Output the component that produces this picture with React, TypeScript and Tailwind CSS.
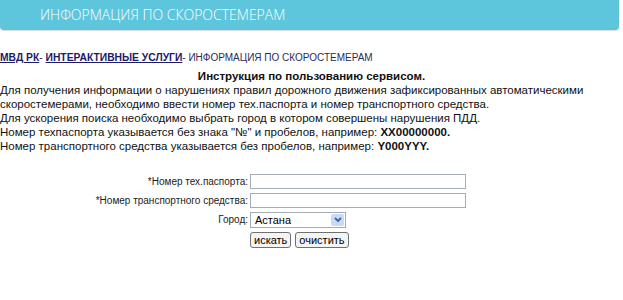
import React from "react";

const tahoma = { fontFamily: '"Liberation Sans", Arial, sans-serif' };

export default function App() {
  return (
    <div className="w-[623px] h-[300px] bg-white overflow-hidden text-black" style={tahoma}>
      <div className="mr-[4px] h-[30px] bg-[#5ec6dc] rounded-b-[4px] shadow-[0_1px_1px_rgba(0,0,0,0.15)] flex items-center pl-[40px]">
        <span
          className="text-white text-[14px] font-light leading-none"
          style={{ fontFamily: '"Open Sans", Lato, sans-serif' }}
        >
          ИНФОРМАЦИЯ ПО СКОРОСТЕМЕРАМ
        </span>
      </div>

      <div className="mt-[21px] text-[10.3px] leading-[14px] whitespace-nowrap">
        <span className="font-bold underline text-[#1b1b6b]">МВД РК</span>
        <span className="text-[#1b1b6b]">- </span>
        <span className="font-bold underline text-[#1b1b6b]">ИНТЕРАКТИВНЫЕ УСЛУГИ</span>
        <span className="text-[#2b2b5b] text-[10px]">- ИНФОРМАЦИЯ ПО СКОРОСТЕМЕРАМ</span>
      </div>

      <div className="mt-[4px] text-[11.5px] leading-[14px] text-[#111] whitespace-nowrap">
        <div className="text-center font-bold text-[11.5px]">Инструкция по пользованию сервисом.</div>
        <div>Для получения информации о нарушениях правил дорожного движения зафиксированных автоматическими</div>
        <div>скоростемерами, необходимо ввести номер тех.паспорта и номер транспортного средства.</div>
        <div>Для ускорения поиска необходимо выбрать город в котором совершены нарушения ПДД.</div>
        <div>
          Номер техпаспорта указывается без знака "№" и пробелов, например: <b>XX00000000.</b>
        </div>
        <div>
          Номер транспортного средства указывается без пробелов, например: <b>Y000YYY.</b>
        </div>
      </div>

      <div className="mt-[21px] grid grid-cols-[250px_auto] gap-y-[4px] text-[10px] text-[#222]">
        <div className="text-right pr-[2px] leading-[15px]">*Номер тех.паспорта:</div>
        <div className="w-[216px] h-[15px] border border-[#a5acb5] bg-white" />
        <div className="text-right pr-[2px] leading-[15px]">*Номер транспортного средства:</div>
        <div className="w-[216px] h-[15px] border border-[#a5acb5] bg-white" />
        <div className="text-right pr-[2px] leading-[16px]">Город:</div>
        <div className="w-[96px] h-[16px] border border-[#a5acb5] bg-white flex items-center justify-between pl-[4px] pr-[1px] text-[11px] text-black">
          <span>Астана</span>
          <span className="w-[13px] h-[12px] bg-[#c8daf7] rounded-[2px] flex items-center justify-center">
            <svg width="8" height="6" viewBox="0 0 8 6">
              <path d="M1 1 L4 4 L7 1" stroke="#3d5fa3" strokeWidth="1.8" fill="none" />
            </svg>
          </span>
        </div>
        <div />
        <div className="flex gap-[4px]">
          <button className="h-[16px] px-[3px] border border-[#707070] rounded-[3px] bg-[#f4f4f4] text-[11px] leading-none text-black">
            искать
          </button>
          <button className="h-[16px] px-[3px] border border-[#707070] rounded-[3px] bg-[#f4f4f4] text-[11px] leading-none text-black">
            очистить
          </button>
        </div>
      </div>
    </div>
  );
}
